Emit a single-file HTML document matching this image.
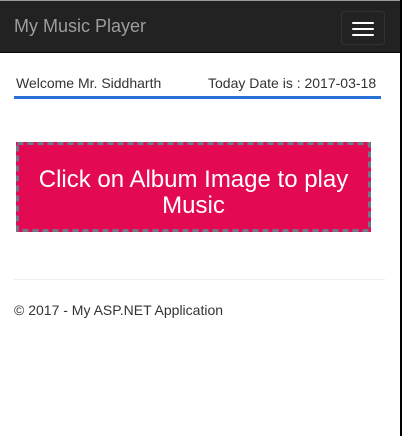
<!DOCTYPE html>
<html><head><style>
body{margin:0;width:402px;height:436px;background:#fff;position:relative;overflow:hidden;font-family:"Liberation Sans",sans-serif;}
.top{position:absolute;left:0;top:0;width:402px;height:1px;background:#999;}
.nav{position:absolute;left:0;top:1px;width:400px;height:51px;background:#222;border-bottom:1px solid #080808;}
.brand{position:absolute;left:14px;top:15px;font-size:18px;color:#9d9d9d;}
.btn{position:absolute;left:341px;top:10px;width:42px;height:32px;border:1px solid #333;border-radius:4px;}
.btn i{position:absolute;left:10px;width:22px;height:2px;background:#fff;border-radius:1px;}
.rbar{position:absolute;left:400px;top:0;width:2px;height:436px;background:#000;}
.w{position:absolute;top:75px;font-size:14px;color:#333;}
.line{position:absolute;left:14px;top:96px;width:367px;height:3px;background:#2a6fd6;}
.box{position:absolute;left:16px;top:142px;width:355px;height:90px;background:#e30a53;color:#fff;font-size:24px;text-align:center;line-height:26px;}
.box svg{position:absolute;left:0;top:0;}
.box div{position:relative;margin-top:25px;}
.hr{position:absolute;left:14px;top:279px;width:371px;height:1px;background:#eee;}
.foot{position:absolute;left:14px;top:302px;font-size:14px;color:#333;}
</style></head><body>
<div class="top"></div>
<div class="nav"><div class="brand">My Music Player</div>
<div class="btn"><i style="top:10px"></i><i style="top:16px"></i><i style="top:22px"></i></div></div>
<div class="rbar"></div>
<div class="w" style="left:16px">Welcome Mr. Siddharth</div>
<div class="w" style="left:208px">Today Date is : 2017-03-18</div>
<div class="line"></div>
<div class="box"><svg width="355" height="90"><rect x="1.5" y="1.5" width="352" height="87" fill="none" stroke="#6c7a89" stroke-width="3" stroke-dasharray="6 4"/></svg><div>Click on Album Image to play<br>Music</div></div>
<div class="hr"></div>
<div class="foot">© 2017 - My ASP.NET Application</div>
</body></html>
